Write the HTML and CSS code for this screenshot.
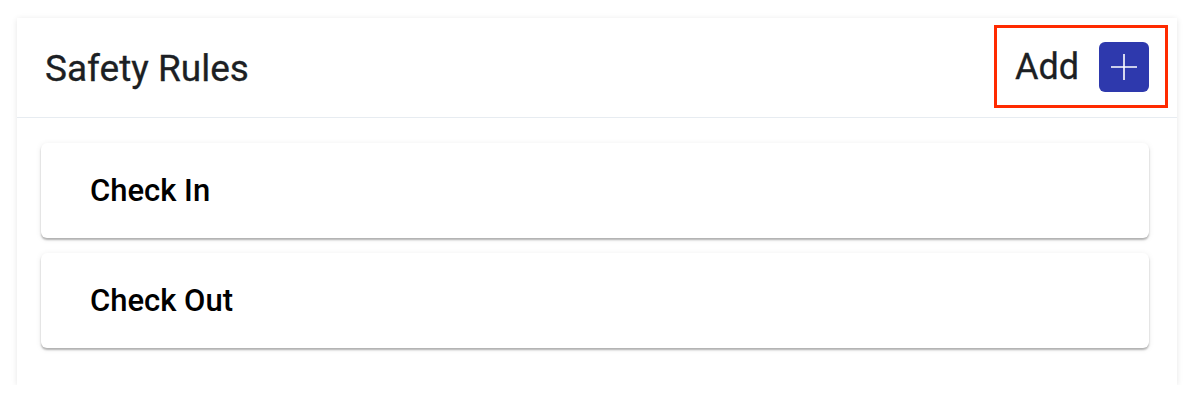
FILE: index.html
```html
<!DOCTYPE html>
<html lang="en">
<head>
<meta charset="utf-8">
<title>Safety Rules</title>
<link rel="stylesheet" href="styles.css">
</head>
<body>
<section class="panel">
  <header class="panel-header">
    <h1 class="panel-title">Safety Rules</h1>
    <div class="add-group">
      <span class="add-label">Add</span>
      <button class="add-btn" type="button" aria-label="Add">
        <svg width="26" height="26" viewBox="0 0 26 26"><path d="M13 0V26M0 13H26" stroke="#fff" stroke-width="1.6" fill="none"/></svg>
      </button>
    </div>
  </header>
  <div class="panel-body">
    <div class="rule-card">Check In</div>
    <div class="rule-card">Check Out</div>
  </div>
</section>
</body>
</html>
```
FILE: styles.css
```css
html, body {
  margin: 0;
  background: #ffffff;
}
body {
  padding: 18px 16px 0 17px;
  font-family: Roboto, "Liberation Sans", sans-serif;
}
.panel {
  width: 1160px;
  background: #fff;
  box-shadow: 0 1px 6px rgba(0,0,0,0.10);
}
.panel-header {
  height: 99px;
  display: flex;
  align-items: center;
  justify-content: space-between;
  padding: 0 9px 0 28px;
  border-bottom: 1.5px solid #e7ecf1;
}
.panel-title {
  margin: 0;
  font-size: 37px;
  font-weight: 400;
  color: #1c1f24;
  letter-spacing: 0;
  padding-top: 2px;
  -webkit-text-stroke: 0.3px #1c1f24;
}
.add-group {
  display: flex;
  align-items: center;
  gap: 20px;
  border: 3px solid #ff2a00;
  padding: 14px 16px 13px 18px;
  margin-top: -2px;
}
.add-label {
  font-size: 36px;
  color: #1c1f24;
  -webkit-text-stroke: 0.3px #1c1f24;
}
.add-btn {
  width: 50px;
  height: 50px;
  border: none;
  border-radius: 6px;
  background: #2e39ad;
  display: flex;
  align-items: center;
  justify-content: center;
  padding: 0;
}
.panel-body {
  padding: 25px 28px 37px 24px;
  display: flex;
  flex-direction: column;
  gap: 15px;
}
.rule-card {
  height: 95px;
  display: flex;
  align-items: center;
  padding-left: 49px;
  background: #fff;
  border-radius: 6px;
  font-size: 31px;
  font-weight: 500;
  color: #000;
  box-shadow: 0 2px 2px rgba(0,0,0,0.28), 0 1px 6px rgba(0,0,0,0.08);
}
```
